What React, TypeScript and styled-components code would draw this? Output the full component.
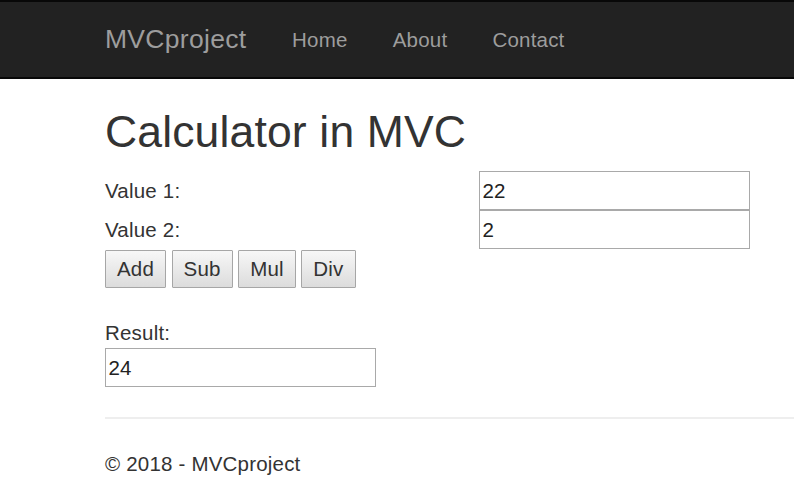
import React from "react";
import styled, { createGlobalStyle } from "styled-components";

const GlobalStyle = createGlobalStyle`
  html, body {
    margin: 0;
    padding: 0;
    background: #fff;
  }
  body {
    font-family: "Liberation Sans", Arial, Helvetica, sans-serif;
    font-size: 20.5px;
    letter-spacing: 0.2px;
    line-height: 28.6px;
    color: #333;
  }
  * { box-sizing: border-box; }
`;

const Navbar = styled.nav`
  display: flex;
  align-items: center;
  height: 79px;
  padding-left: 105px;
  background: #222;
  border-top: 2px solid #080808;
  border-bottom: 2px solid #080808;
`;

const Brand = styled.a`
  font-size: 26.5px;
  letter-spacing: 0.3px;
  line-height: normal;
  color: #9d9d9d;
  text-decoration: none;
  padding-right: 23px;
`;

const NavLink = styled.a`
  font-size: 20.5px;
  line-height: normal;
  color: #9d9d9d;
  text-decoration: none;
  padding: 0 22.6px;
`;

const Content = styled.main`
  padding-left: 105px;
`;

const Title = styled.h2`
  margin: 28.5px 0 0;
  font-size: 44.5px;
  letter-spacing: 0.15px;
  font-weight: 500;
  line-height: 1.1;
  color: #333;
`;

const FormGrid = styled.div`
  display: grid;
  grid-template-columns: 374px 271px;
  grid-auto-rows: 39px;
  align-items: center;
  margin-top: 15px;
`;

const Label = styled.label`
  display: block;
  font-weight: normal;
`;

const TextBox = styled.input`
  display: block;
  width: 271px;
  height: 39px;
  margin: 0;
  padding: 0 2.5px;
  border: 1px solid #a9a9a9;
  border-radius: 0;
  font-family: "Liberation Sans", Arial, sans-serif;
  font-size: 20.5px;
  letter-spacing: 0.2px;
  color: #222;
  background: #fff;
  outline: none;
`;

const ButtonRow = styled.div`
  display: flex;
  gap: 5.5px;
  margin-top: 1px;
`;

const OpButton = styled.button`
  height: 38px;
  padding: 0 11px;
  border: 1px solid #a6a6a6;
  border-radius: 1px;
  background: linear-gradient(#f7f7f7, #dcdcdc);
  font-family: "Liberation Sans", Arial, sans-serif;
  font-size: 20.5px;
  letter-spacing: 0.2px;
  color: #333;
  cursor: pointer;
`;

const ResultBlock = styled.div`
  margin-top: 31px;
`;

const Divider = styled.hr`
  margin: 30px 0 0;
  border: 0;
  border-top: 2px solid #eee;
`;

const Footer = styled.footer`
  margin-top: 31px;
`;

const FooterText = styled.p`
  margin: 0;
`;

export default function App() {
  return (
    <>
      <GlobalStyle />
      <Navbar>
        <Brand href="#">MVCproject</Brand>
        <NavLink href="#">Home</NavLink>
        <NavLink href="#">About</NavLink>
        <NavLink href="#">Contact</NavLink>
      </Navbar>
      <Content>
        <Title>Calculator in MVC</Title>
        <FormGrid>
          <Label>Value 1:</Label>
          <TextBox defaultValue="22" />
          <Label>Value 2:</Label>
          <TextBox defaultValue="2" />
        </FormGrid>
        <ButtonRow>
          <OpButton>Add</OpButton>
          <OpButton>Sub</OpButton>
          <OpButton>Mul</OpButton>
          <OpButton>Div</OpButton>
        </ButtonRow>
        <ResultBlock>
          <Label>Result:</Label>
          <TextBox defaultValue="24" />
        </ResultBlock>
        <Divider />
        <Footer>
          <FooterText>© 2018 - MVCproject</FooterText>
        </Footer>
      </Content>
    </>
  );
}
